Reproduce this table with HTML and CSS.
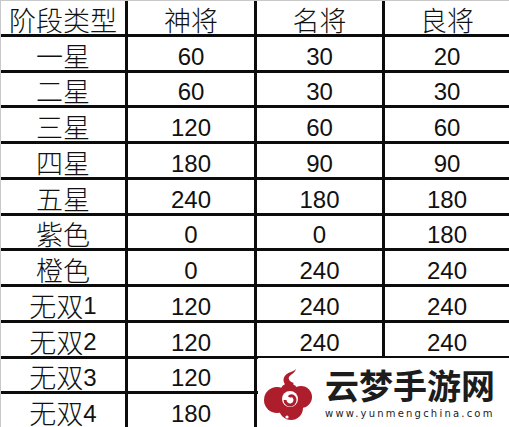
FILE: index.html
```html
<!DOCTYPE html>
<html lang="zh">
<head>
<meta charset="utf-8">
<link rel="stylesheet" href="styles.css">
</head>
<body>
<div class="page">
  <div class="grid">
    <div class="cell zh">阶段类型</div><div class="cell zh">神将</div><div class="cell zh">名将</div><div class="cell zh">良将</div>
    <div class="cell zh">一星</div><div class="cell num">60</div><div class="cell num">30</div><div class="cell num">20</div>
    <div class="cell zh">二星</div><div class="cell num">60</div><div class="cell num">30</div><div class="cell num">30</div>
    <div class="cell zh">三星</div><div class="cell num">120</div><div class="cell num">60</div><div class="cell num">60</div>
    <div class="cell zh">四星</div><div class="cell num">180</div><div class="cell num">90</div><div class="cell num">90</div>
    <div class="cell zh">五星</div><div class="cell num">240</div><div class="cell num">180</div><div class="cell num">180</div>
    <div class="cell zh">紫色</div><div class="cell num">0</div><div class="cell num">0</div><div class="cell num">180</div>
    <div class="cell zh">橙色</div><div class="cell num">0</div><div class="cell num">240</div><div class="cell num">240</div>
    <div class="cell zh">无双<span class="d">1</span></div><div class="cell num">120</div><div class="cell num">240</div><div class="cell num">240</div>
    <div class="cell zh">无双<span class="d">2</span></div><div class="cell num">120</div><div class="cell num">240</div><div class="cell num">240</div>
    <div class="cell zh">无双<span class="d">3</span></div><div class="cell num">120</div><div class="cell num"></div><div class="cell num"></div>
    <div class="cell zh">无双<span class="d">4</span></div><div class="cell num">180</div><div class="cell num"></div><div class="cell num"></div>
  </div>
  <div class="logo">
    <svg class="mark" viewBox="0 0 52 52" width="52" height="52">
      <g fill="#ad1d2b">
        <circle cx="14" cy="32" r="13"/>
        <circle cx="28" cy="40" r="12"/>
        <circle cx="38" cy="29" r="11"/>
        <circle cx="26" cy="24" r="9"/>
      </g>
      <circle cx="27" cy="31" r="8" fill="#fff"/>
      <path d="M27 31 m-5 1 a5 5 0 1 0 9 -3 a3 3 0 0 0 -5 0" fill="none" stroke="#ad1d2b" stroke-width="3"/>
      <circle cx="24" cy="49" r="1.6" fill="#fff"/>
      <circle cx="42" cy="42" r="2" fill="#fff"/>
      <path d="M24 18 C 18 14, 20 6, 28 4 C 31 3, 33 1, 33 1 C 32 5, 28 6, 26 9 C 25 11, 27 14, 31 15 C 29 17, 26 18, 24 18 Z" fill="#ad1d2b"/>
    </svg>
    <div class="brand">
      <div class="title">云梦手游网</div>
      <div class="url">www.yunmengchina.com</div>
    </div>
  </div>
</div>
</body>
</html>
```
FILE: styles.css
```css
html, body {
  margin: 0;
  padding: 0;
  background: #fff;
}
.page {
  position: relative;
  width: 509px;
  height: 427px;
  overflow: hidden;
}
.grid {
  display: grid;
  grid-template-columns: 124px 126px 125px 124px;
  grid-template-rows: repeat(12, minmax(0, 1fr));
  gap: 3px;
  height: 426px;
  background: #0c0c0c;
  border-left: 1px solid #c8c8c8;
  border-top: 1px solid #c8c8c8;
}
.cell {
  background: #fff;
  color: #111;
  display: flex;
  justify-content: center;
  align-items: center;
  padding-top: 4px;
  box-sizing: border-box;
  white-space: nowrap;
}
.zh {
  font-family: "Noto Sans CJK SC", sans-serif;
  font-weight: 300;
  font-size: 27px;
  line-height: 27px;
}
.num, .d {
  font-family: "Liberation Sans", sans-serif;
  font-size: 24px;
  line-height: 24px;
}
.num {
  padding-top: 7px;
}
.d {
  padding-top: 2px;
}
.logo {
  position: absolute;
  left: 258px;
  top: 358px;
  width: 251px;
  height: 69px;
  background: #fff;
  display: flex;
  align-items: flex-start;
  gap: 10px;
  padding: 10px 0 0 5px;
  box-sizing: border-box;
}
.brand {
  display: flex;
  flex-direction: column;
  align-items: flex-start;
}
.title {
  font-family: "Noto Sans CJK SC", sans-serif;
  font-weight: 700;
  font-size: 34px;
  line-height: 34px;
  color: #1c1c1c;
}
.url {
  font-family: "DejaVu Sans", sans-serif;
  font-size: 10px;
  line-height: 12px;
  letter-spacing: 2.2px;
  color: #222;
  margin-top: 6px;
}
```
